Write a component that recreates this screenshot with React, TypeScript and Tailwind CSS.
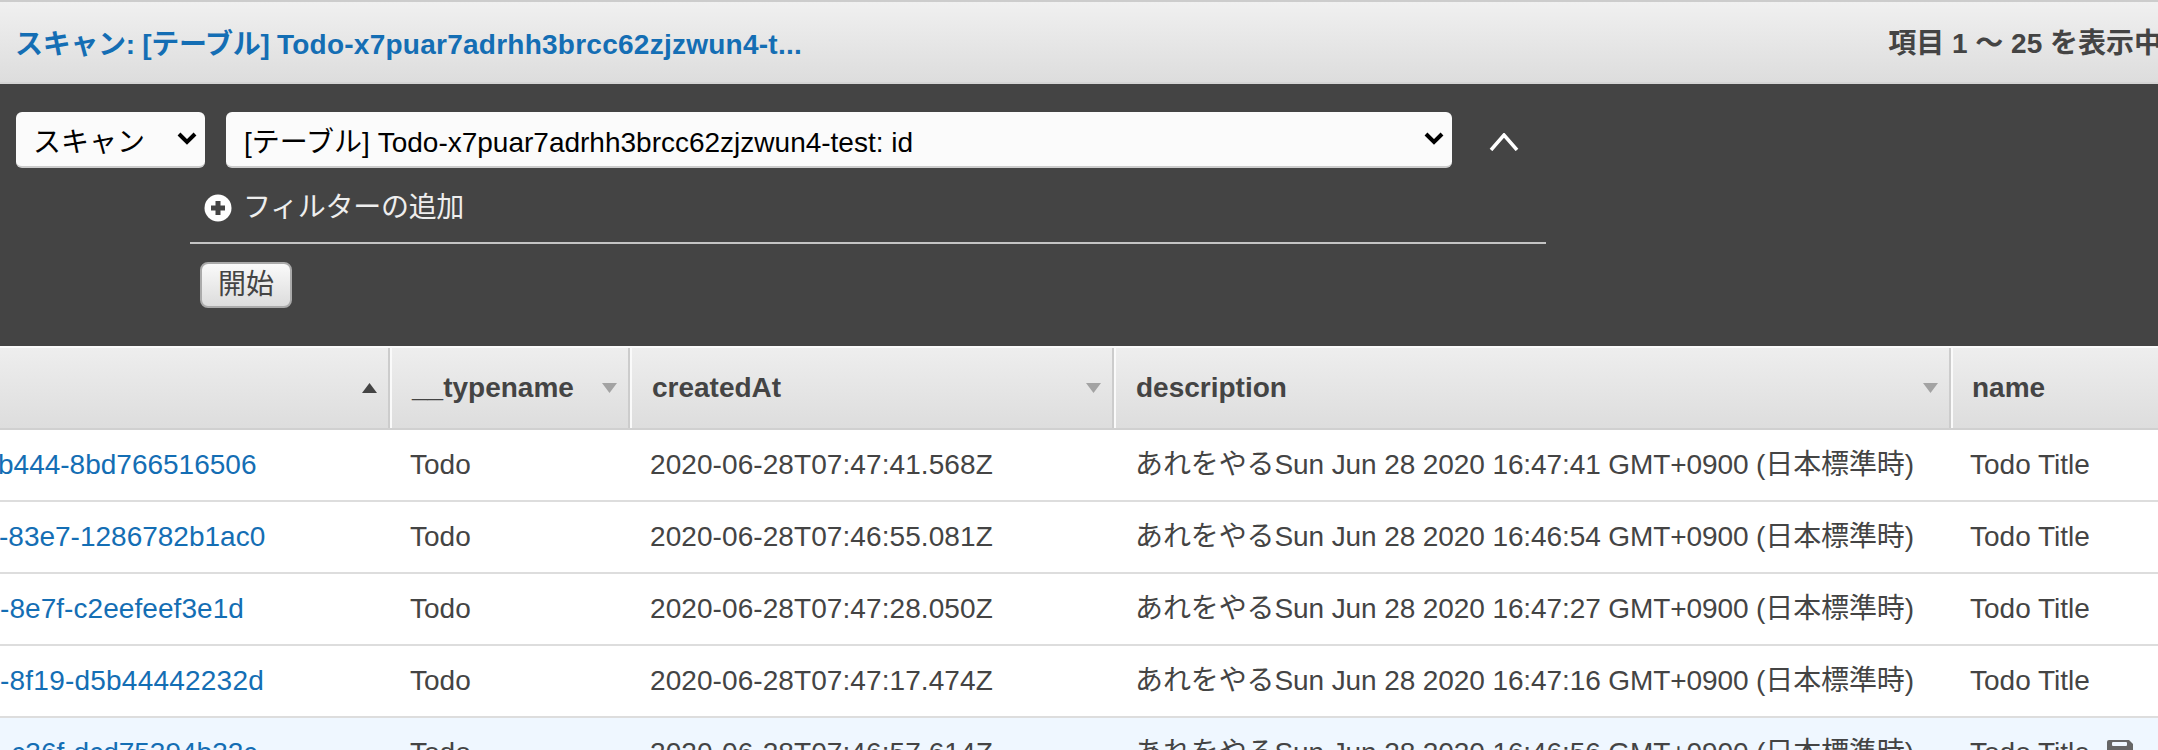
const font = "font-['Liberation_Sans','Noto_Sans_CJK_JP',sans-serif]";

const rows = [
  { id: "b444-8bd766516506", idClass: "-ml-[2px]", createdAt: "2020-06-28T07:47:41.568Z", date: "16:47:41" },
  { id: "-83e7-1286782b1ac0", idClass: "-ml-[1px]", createdAt: "2020-06-28T07:46:55.081Z", date: "16:46:54" },
  { id: "-8e7f-c2eefeef3e1d", idClass: "tracking-[0.06px]", createdAt: "2020-06-28T07:47:28.050Z", date: "16:47:27" },
  { id: "-8f19-d5b44442232d", idClass: "tracking-[0.22px]", createdAt: "2020-06-28T07:47:17.474Z", date: "16:47:16" },
  { id: "-c36f-dcd75394b32c", idClass: "ml-[2px]", createdAt: "2020-06-28T07:46:57.614Z", date: "16:46:56", hover: true },
];

function Arrow({ up }: { up?: boolean }) {
  return (
    <svg width="15" height="10" viewBox="0 0 15 10" className={up ? "fill-[#444444]" : "fill-[#a3a3a3]"}>
      <path d={up ? "M7.5 0L15 10H0Z" : "M0 0H15L7.5 10Z"} />
    </svg>
  );
}

function HeaderCell({ label, arrow, className }: { label?: string; arrow?: "up" | "down"; className: string }) {
  return (
    <div className={`flex h-full items-center justify-between pr-[11px] ${className}`}>
      <span className="text-[28px] font-bold text-[#444444]">{label}</span>
      {arrow && <Arrow up={arrow === "up"} />}
    </div>
  );
}

function Chevron() {
  return (
    <svg width="20" height="14" viewBox="0 0 20 14" fill="none" stroke="#000000" strokeWidth="4">
      <path d="M2 2l8 8 8-8" />
    </svg>
  );
}

export default function App() {
  return (
    <div className={`h-[750px] w-[2158px] overflow-hidden bg-white ${font}`}>
      <div className="flex h-[84px] items-center justify-between border-b-2 border-t-2 border-b-[#d5d5d5] border-t-[#cccccc] bg-gradient-to-b from-[#f0f0f0] to-[#dddddd] pl-[15px]">
        <a className="whitespace-nowrap pt-[6px] text-[28px] font-bold text-[#146eb4]">
          <span className="tracking-[-0.3px]">スキャン: [テーブル] </span>
          <span className="tracking-[0.25px]">Todo-x7puar7adrhh3brcc62zjzwun4-t...</span>
        </a>
        <span className="-mr-[4px] whitespace-nowrap pt-[3px] text-[28px] font-bold text-[#444444]">項目 1 〜 25 を表示中</span>
      </div>

      <div className="h-[262px] bg-[#444444] pl-4 pt-7">
        <div className="flex items-center gap-[21px]">
          <div className="flex h-[56px] w-[189px] items-center justify-between rounded-md border-b-2 border-[#cccccc] bg-[#fbfbfb] pl-[17px] pr-[8px] text-[28px] text-black">
            <span className="pt-2">スキャン</span>
            <Chevron />
          </div>
          <div className="flex h-[56px] w-[1226px] items-center justify-between rounded-md border-b-2 border-[#cccccc] bg-[#fbfbfb] pl-[18px] pr-[8px] text-[28px] text-black">
            <span className="pt-2">[テーブル] Todo-x7puar7adrhh3brcc62zjzwun4-test: id</span>
            <Chevron />
          </div>
          <svg width="30" height="18" viewBox="0 0 30 18" fill="none" stroke="#ffffff" strokeWidth="3.5" className="ml-[16px] mt-[3px]">
            <path d="M2 17L15 2l13 15" />
          </svg>
        </div>

        <div className="ml-[174px] w-[1356px] border-b-2 border-[#c4c4c4]">
          <div className="flex h-[74px] items-center gap-[11px] pl-[14px] pt-[6px] text-[28px] tracking-[-0.3px] text-[#eeeeee]">
            <svg width="28" height="28" viewBox="0 0 28 28">
              <circle cx="14" cy="14" r="13.5" fill="#ffffff" />
              <path d="M14 7v14M7 14h14" stroke="#444444" strokeWidth="5" />
            </svg>
            フィルターの追加
          </div>
        </div>

        <button className="ml-[184px] mt-[18px] flex h-[46px] w-[92px] items-center justify-center rounded-lg border-2 border-[#aaaaaa] bg-gradient-to-b from-[#fafafa] to-[#dcdcdc] text-[28px] text-[#444444]">
          開始
        </button>
      </div>

      <div className="h-[2px] bg-[#fafafa]" />

      <div className="grid h-[82px] grid-cols-[390px_240px_484px_837px_1fr] border-b-2 border-[#d0d0d0] bg-gradient-to-b from-[#eeeeee] to-[#dddddd]">
        <HeaderCell arrow="up" className="justify-end border-r-2 border-r-[#cccccc]" />
        <HeaderCell label="__typename" arrow="down" className="border-x-2 border-l-[#fafafa] border-r-[#cccccc] pl-[20px]" />
        <HeaderCell label="createdAt" arrow="down" className="border-x-2 border-l-[#fafafa] border-r-[#cccccc] pl-[20px]" />
        <HeaderCell label="description" arrow="down" className="border-x-2 border-l-[#fafafa] border-r-[#cccccc] pl-[20px]" />
        <HeaderCell label="name" className="border-l-2 border-l-[#fafafa] pl-[19px]" />
      </div>

      {rows.map((row) => (
        <div
          key={row.id}
          className={`grid h-[72px] grid-cols-[390px_240px_484px_837px_1fr] items-center border-b-2 border-[#dddddd] text-[28px] text-[#444444] ${row.hover ? "bg-[#eff7ff]" : "bg-white"}`}
        >
          <div className="overflow-hidden whitespace-nowrap text-[#146eb4]">
            <span className={`block ${row.idClass}`}>{row.id}</span>
          </div>
          <div className="pl-[20px]">Todo</div>
          <div className="pl-[20px] tracking-[0.08px]">{row.createdAt}</div>
          <div className="whitespace-nowrap pl-[21px] tracking-[-0.1px]">あれをやるSun Jun 28 2020 {row.date} GMT+0900 (日本標準時)</div>
          <div className="flex items-center gap-[17px] whitespace-nowrap pl-[19px]">
            Todo Title
            {row.hover && (
              <svg width="26" height="26" viewBox="0 0 26 26" className="fill-[#666666]">
                <path d="M0 2a2 2 0 0 1 2-2h20l4 4v20a2 2 0 0 1-2 2H2a2 2 0 0 1-2-2Z" />
                <rect x="5" y="2" width="15" height="4" rx="1" fill="#eff7ff" />
              </svg>
            )}
          </div>
        </div>
      ))}
    </div>
  );
}
